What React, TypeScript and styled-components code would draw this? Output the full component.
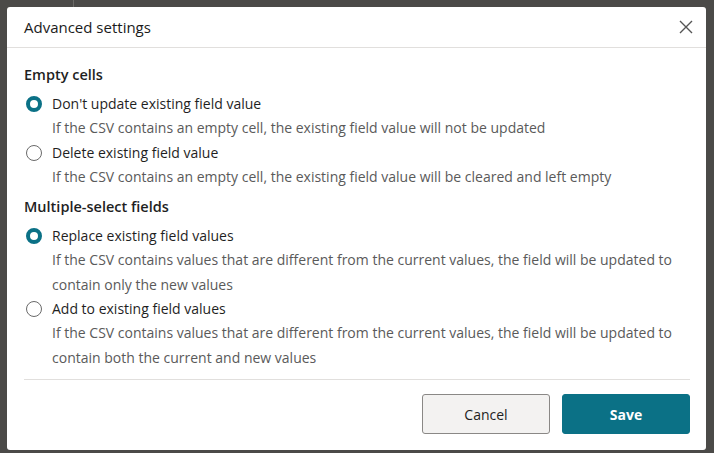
import React from "react";
import styled, { createGlobalStyle } from "styled-components";

const Global = createGlobalStyle`
  html, body { margin: 0; padding: 0; }
  body {
    background: #4b4a48;
    font-family: "Open Sans", "Noto Sans", sans-serif;
    -webkit-font-smoothing: antialiased;
  }
`;

const Backdrop = styled.div`
  width: 714px;
  height: 453px;
  box-sizing: border-box;
  padding: 7px 8px 3px 7px;
  overflow: hidden;
  position: relative;
`;

const BgLine = styled.div`
  position: absolute;
  left: 73px;
  top: 0;
  width: 1px;
  height: 7px;
  background: #6a6966;
`;

const Modal = styled.div`
  background: #ffffff;
  border-radius: 3px;
  height: 443px;
  display: flex;
  flex-direction: column;
  color: #1f1f1f;
`;

const Header = styled.div`
  height: 40px;
  display: flex;
  align-items: center;
  justify-content: space-between;
  padding: 0 10px 0 17px;
  border-bottom: 1px solid #e1dfdd;
`;

const Title = styled.h1`
  margin: 0;
  font-size: 15px;
  font-weight: 500;
  color: #1b1b1b;
`;

const CloseButton = styled.button`
  border: 0;
  background: none;
  padding: 0;
  width: 20px;
  height: 20px;
  display: flex;
  align-items: center;
  justify-content: center;
  cursor: pointer;
`;

const Body = styled.div`
  flex: 1;
  padding: 15px 16px 0 17px;
  display: flex;
  flex-direction: column;
`;

const Section = styled.div<{ $gap: number }>`
  margin-top: ${(p) => p.$gap}px;
  display: flex;
  flex-direction: column;
`;

const SectionTitle = styled.div`
  font-size: 14.5px;
  font-weight: 600;
  line-height: 24px;
  margin-bottom: 5px;
  color: #1f1f1f;
`;

const Option = styled.label`
  display: grid;
  grid-template-columns: 18px 1fr;
  column-gap: 10px;
  align-items: start;
  cursor: pointer;
`;

const Radio = styled.span<{ $checked: boolean }>`
  margin: 4px 0 0 2px;
  width: 16px;
  height: 16px;
  box-sizing: border-box;
  border-radius: 50%;
  border: ${(p) => (p.$checked ? "4.5px solid #0b7186" : "1px solid #6a6a6a")};
  background: #fff;
`;

const Label = styled.div`
  font-size: 14px;
  line-height: 24px;
  color: #1f1f1f;
`;

const Desc = styled.div`
  grid-column: 2;
  font-size: 14px;
  line-height: 24.5px;
  color: #5a5a5a;
  max-width: 640px;
`;

const Footer = styled.div`
  margin: 0 16px 0 17px;
  border-top: 1px solid #e1dfdd;
  padding: 14px 0 16px;
  display: flex;
  justify-content: flex-end;
  gap: 12px;
`;

const Button = styled.button<{ $primary?: boolean }>`
  width: 128px;
  height: 40px;
  box-sizing: border-box;
  border-radius: 3px;
  font-family: inherit;
  font-size: 14px;
  font-weight: ${(p) => (p.$primary ? 700 : 500)};
  color: ${(p) => (p.$primary ? "#ffffff" : "#1f1f1f")};
  background: ${(p) => (p.$primary ? "#0b7186" : "#f3f2f1")};
  border: ${(p) => (p.$primary ? "1px solid #0b7186" : "1px solid #8a8886")};
  cursor: pointer;
`;

type Opt = { label: string; desc: string; checked: boolean };

const sections: { title: string; gap: number; options: Opt[] }[] = [
  {
    title: "Empty cells",
    gap: 0,
    options: [
      {
        label: "Don't update existing field value",
        desc: "If the CSV contains an empty cell, the existing field value will not be updated",
        checked: true,
      },
      {
        label: "Delete existing field value",
        desc: "If the CSV contains an empty cell, the existing field value will be cleared and left empty",
        checked: false,
      },
    ],
  },
  {
    title: "Multiple-select fields",
    gap: 6,
    options: [
      {
        label: "Replace existing field values",
        desc: "If the CSV contains values that are different from the current values, the field will be updated to contain only the new values",
        checked: true,
      },
      {
        label: "Add to existing field values",
        desc: "If the CSV contains values that are different from the current values, the field will be updated to contain both the current and new values",
        checked: false,
      },
    ],
  },
];

export default function App() {
  return (
    <>
      <Global />
      <Backdrop>
        <BgLine />
        <Modal>
          <Header>
            <Title>Advanced settings</Title>
            <CloseButton aria-label="Close">
              <svg width="14" height="14" viewBox="0 0 14 14">
                <path d="M1 1L13 13M13 1L1 13" stroke="#555" strokeWidth="1.4" />
              </svg>
            </CloseButton>
          </Header>
          <Body>
            {sections.map((s) => (
              <Section key={s.title} $gap={s.gap}>
                <SectionTitle>{s.title}</SectionTitle>
                {s.options.map((o) => (
                  <Option key={o.label}>
                    <Radio $checked={o.checked} />
                    <Label>{o.label}</Label>
                    <Desc>{o.desc}</Desc>
                  </Option>
                ))}
              </Section>
            ))}
          </Body>
          <Footer>
            <Button>Cancel</Button>
            <Button $primary>Save</Button>
          </Footer>
        </Modal>
      </Backdrop>
    </>
  );
}
